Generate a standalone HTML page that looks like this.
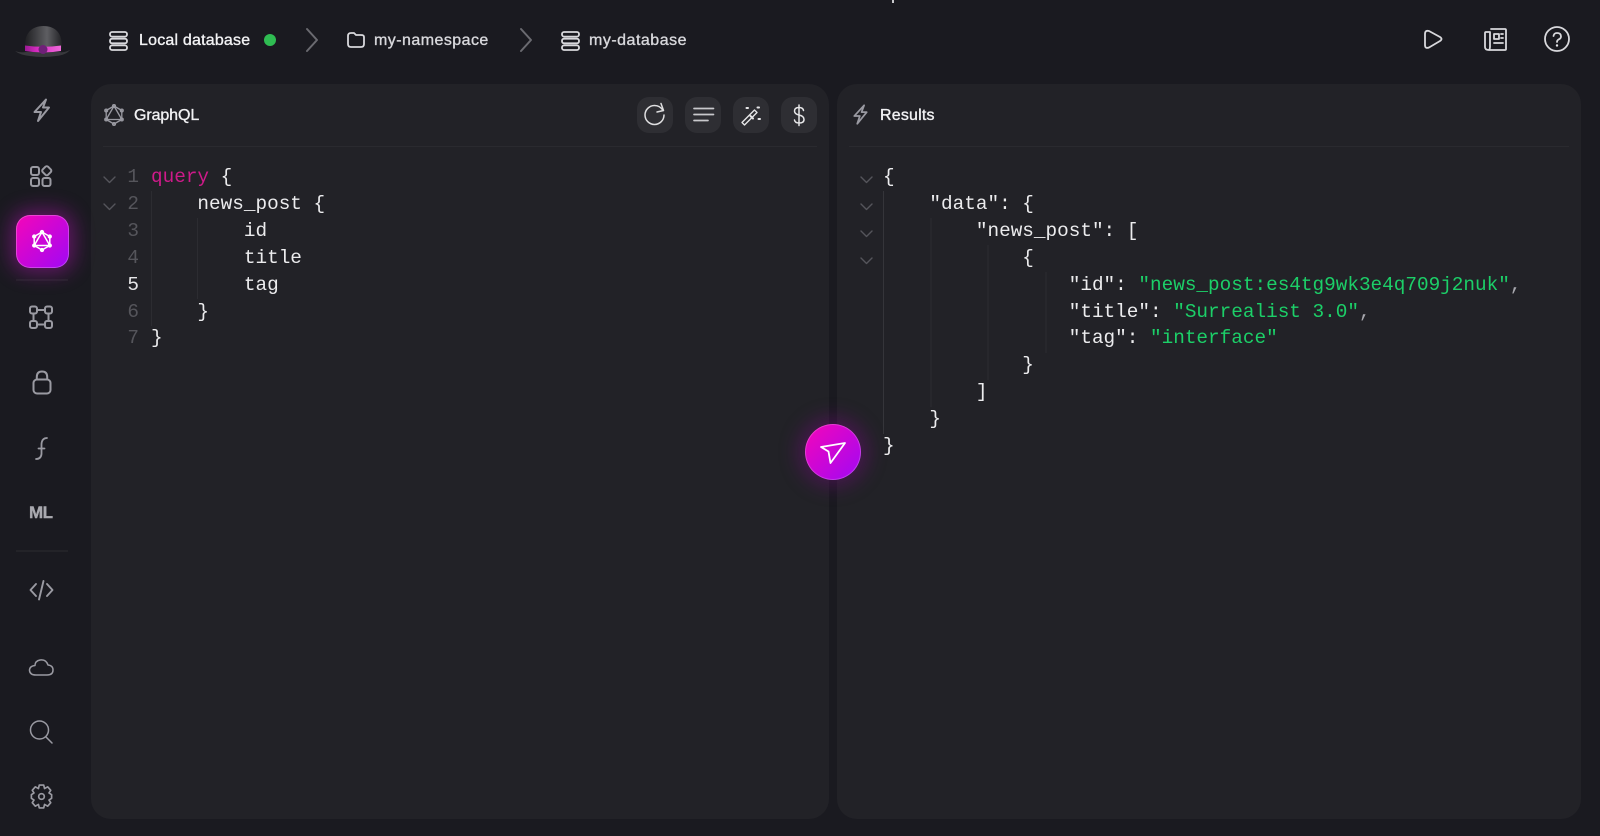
<!DOCTYPE html>
<html><head><meta charset="utf-8"><style>
html,body{margin:0;padding:0;width:1600px;height:836px;overflow:hidden;background:#1a1a20}
body{position:relative;font-family:"Liberation Sans",sans-serif;color:#f2f2f4}
.a{position:absolute}
.panel{position:absolute;top:84px;height:735px;background:#222227;border-radius:20px}
.hr{position:absolute;top:146px;height:1px;background:#2a2a2f}
.t{position:absolute;font-size:16px;line-height:20px;white-space:nowrap;-webkit-text-stroke:.35px currentColor;letter-spacing:.2px}
.c{position:absolute;font-family:"Liberation Mono",monospace;font-size:19.35px;line-height:26.9px;white-space:pre;color:#ececee}
.n{position:absolute;font-family:"Liberation Mono",monospace;font-size:19.35px;line-height:26.9px;color:#55555b;text-align:right;width:20px;left:119px}
.btn{position:absolute;top:97px;width:36px;height:36px;border-radius:12px;background:#2e2e33}
.k{color:#cf1a8a}.g{color:#1ccf68}.p{color:#a8a8ae}
svg{position:absolute;overflow:visible}
.ic{fill:none;stroke:#9a9aa2;stroke-width:2;stroke-linecap:round;stroke-linejoin:round}
.w{fill:none;stroke:#d8d8dc;stroke-width:1.8;stroke-linecap:round;stroke-linejoin:round}
</style></head><body>

<div class="panel" style="left:91px;width:738px"></div>
<div class="panel" style="left:837px;width:744px"></div>
<div class="hr" style="left:103px;width:714px"></div>
<div class="hr" style="left:849px;width:720px"></div>
<div class="a" style="left:892px;top:0;width:2px;height:3px;background:#c8c8cc"></div>

<svg width="1600" height="836" style="left:0;top:0">
<defs>
<linearGradient id="hat" x1="0" y1="0" x2="1" y2="0"><stop offset="0" stop-color="#1f1f22"/><stop offset=".6" stop-color="#5e5e62"/><stop offset="1" stop-color="#242427"/></linearGradient>
<linearGradient id="band" x1="0" y1="0" x2="1" y2="0"><stop offset="0" stop-color="#9c1a94"/><stop offset=".4" stop-color="#e02fc8"/><stop offset="1" stop-color="#ec6ad8"/></linearGradient>
<g id="ql"><path d="M12 3L19.8 16.5H4.2Z"/><path d="M12 3L19.8 7.5V16.5L12 21L4.2 16.5V7.5Z"/><circle cx="12" cy="3" r="1.4"/><circle cx="19.800" cy="7.500" r="1.4"/><circle cx="19.800" cy="16.500" r="1.4"/><circle cx="12" cy="21" r="1.4"/><circle cx="4.200" cy="16.500" r="1.4"/><circle cx="4.200" cy="7.500" r="1.4"/></g>
<g id="db"><rect x="1" y="1" width="17" height="4.6" rx="2"/><rect x="1" y="7.7" width="17" height="4.6" rx="2"/><rect x="1" y="14.4" width="17" height="4.6" rx="2"/></g>
<path id="bolt" d="M17 1.500L5.500 14H12L9 23L20 9.500H14Z"/>
</defs>

<!-- logo -->
<path d="M15 51Q20 55 30 56Q43 58 56 56Q66 55 70 50Q63 53 60 52H26Q20 53 15 51Z" fill="#38383c"/>
<path d="M25 48C24 33 32 26 43.500 26C55 26 63 33 61.500 48Z" fill="url(#hat)"/>
<path d="M25 45.500Q43 48 61 45.500L61 51Q43 54 25 51Z" fill="url(#band)"/>
<circle cx="43" cy="49.500" r="4.500" fill="#6f2078"/>

<!-- breadcrumb -->
<use href="#db" x="109" y="31" class="w"/>
<circle cx="270" cy="40" r="6" fill="#2fbc52"/>
<path d="M307 29L317 40L307 51" fill="none" stroke="#6a6a70" stroke-width="2" stroke-linecap="round" stroke-linejoin="round"/>
<path d="M348 37.500V44Q348 47 351 47H361Q364 47 364 44V37Q364 35 361 35H356L354 33H351Q348 33 348 36Z" class="w"/>
<path d="M521 29L531 40L521 51" fill="none" stroke="#6a6a70" stroke-width="2" stroke-linecap="round" stroke-linejoin="round"/>
<use href="#db" x="561" y="31" class="w"/>

<!-- top right -->
<path d="M1425 34Q1425 30 1429 31L1440 37Q1443 39 1440 41L1429 47.500Q1425 49 1425 45Z" class="w"/>
<path d="M1491 29H1505Q1506 29 1506 30V49Q1506 50 1505 50H1489Q1485 50 1485 47V33Q1485 32 1486 32H1490M1490 32V47Q1490 49 1489 50" class="w"/>
<path d="M1494 34H1499V39H1494ZM1501 34H1503M1501 38H1503M1494 43H1503" class="w" stroke-width="1.500"/>
<circle cx="1557" cy="39" r="12" class="w"/>
<path d="M1553.500 36Q1554 33 1557 33Q1561 33 1561 36.500Q1561 38.500 1558.500 39.500Q1557 40.300 1557 42" class="w" stroke-width="2"/>
<circle cx="1557" cy="45.500" r="1.200" fill="#e6e6e8"/>

<!-- sidebar icons -->
<use href="#bolt" x="29" y="98" class="ic"/>
<g class="ic">
<rect x="31" y="167" width="8" height="8" rx="2"/><rect x="43" y="167" width="7.500" height="7.500" rx="1.800" transform="rotate(45 46.750 170.750)"/>
<rect x="31" y="178" width="8" height="8" rx="2"/><rect x="42.500" y="178" width="8" height="8" rx="2"/>
<rect x="30" y="306.500" width="7" height="7" rx="2"/><rect x="45" y="306.500" width="7" height="7" rx="2"/><rect x="30" y="321" width="7" height="7" rx="2"/><rect x="45" y="321" width="7" height="7" rx="2"/>
<path d="M37 310H45M37 324.500H45M33.500 313.500V321M48.500 313.500V321"/>
<rect x="33.500" y="379.500" width="17" height="14" rx="3.500"/><path d="M36.800 379.500V377Q36.800 371.500 42 371.500Q47.200 371.500 47.200 377V379.500"/>
<path d="M47 438Q42 438 41.500 444L41.500 454Q41 459 36 459M38.500 448.500H44.500" stroke-width="1.800"/>
<path d="M36 584L30.500 590L36 596M47 584L52.500 590L47 596M43.500 581L39 599.500" stroke-width="1.900"/>
<path d="M36 675H47Q53 675 53 670Q53 665.500 48 665Q46 659 40 660Q35 661 35 665.500Q29.500 666 29.500 670.500Q30 675 36 675Z" stroke-width="1.500"/>
<circle cx="39.500" cy="730" r="9" stroke-width="1.500"/><path d="M46 737L52 743" stroke-width="1.500"/>
<g transform="translate(41.500 796.500) scale(.88) translate(-41.500 -797)" stroke-width="1.900"><path d="M39 784H44L45 788L48.500 786L52 790L50 793L53 795V799L50 801L52 804L48.500 808L45 806L44 810H39L38 806L34.500 808L31 804L33 801L30 799V795L33 793L31 790L34.500 786L38 788Z"/><circle cx="41.500" cy="797" r="3.200"/></g>
</g>
<path d="M16 280H68M16 551H68" stroke="#2c2c31" stroke-width="1"/>

<!-- panel icons -->
<use href="#ql" x="102" y="103" fill="none" stroke="#9a9aa2" stroke-width="1.300" stroke-linejoin="round"/>
<use href="#bolt" transform="translate(849.500 104) scale(.86)" class="ic"/>

<!-- indent guides -->
<g stroke="#2c2c31" stroke-width="1">
<path d="M151.500 191V326M197.500 218V299"/>
<path d="M883.500 191V434" stroke="#35353a"/>
<path d="M931 218V407M988 245V380M1046 272V353"/>
</g>

<!-- fold chevrons -->
<g fill="none" stroke="#55555b" stroke-width="1.400" stroke-linecap="round" stroke-linejoin="round">
<path d="M104 177L109.500 182.500L115 177M104 204L109.500 209.500L115 204"/>
<path d="M861 177L866.500 182.500L872 177M861 204L866.500 209.500L872 204M861 231L866.500 236.500L872 231M861 258L866.500 263.500L872 258"/>
</g>
</svg>

<div class="btn" style="left:637px"></div><div class="btn" style="left:685px"></div><div class="btn" style="left:733px"></div><div class="btn" style="left:781px"></div>
<svg width="1600" height="836" style="left:0;top:0">
<path d="M663 110.500Q660 105.500 654.500 105.500A9.500 9.500 0 1 0 664 115" fill="none" stroke="#dedee0" stroke-width="1.500" stroke-linecap="round"/>
<path d="M661 103.500L663.500 110.500L657 112" fill="none" stroke="#dedee0" stroke-width="1.500" stroke-linecap="round" stroke-linejoin="round"/>
<path d="M694 108.500H713.500M694 114.500H713.500M694 120.500H708" fill="none" stroke="#c8c8cc" stroke-width="1.700" stroke-linecap="round"/>
<path d="M742 122.500L744.500 125L757 112.500L754.500 110Z" fill="none" stroke="#e6e6e8" stroke-width="1.400" stroke-linejoin="round"/>
<path d="M746.500 108H748M757.500 107.500H759M758.500 119H760M750.500 116L753 118.500" fill="none" stroke="#e6e6e8" stroke-width="2" stroke-linecap="round"/>
<path d="M803.500 110.500Q803 107.500 799 107.500Q794.500 107.500 794.500 111Q794.500 114 799 115Q804 116 804 119.500Q804 123 799 123Q795 123 794.500 120M799 105V125.500" fill="none" stroke="#e6e6e8" stroke-width="1.500" stroke-linecap="round"/>
</svg>

<!-- active tile -->
<div class="a" style="left:16px;top:215px;width:53px;height:53px;border-radius:14px;background:linear-gradient(135deg,#f505b8,#a008f5);box-shadow:0 0 20px 5px rgba(200,20,200,.42),inset 0 0 0 1px rgba(255,255,255,.25)"></div>
<svg width="24" height="24" style="left:29.500px;top:229px;fill:none;stroke:#fff;stroke-width:1.500;stroke-linejoin:round"><use href="#ql"/></svg>

<!-- send -->
<div class="a" style="left:805px;top:424px;width:56px;height:56px;border-radius:50%;background:linear-gradient(135deg,#f505b8,#a008f5);box-shadow:0 0 0 1px rgba(255,255,255,.22) inset,0 0 18px 8px rgba(130,10,140,.35)"></div>
<svg width="1600" height="836" style="left:0;top:0"><path d="M821 447L845 443L830.500 463L828.500 451.500Z" fill="none" stroke="#fff" stroke-width="1.800" stroke-linejoin="round"/></svg>

<!-- texts -->
<div class="t" style="left:139px;top:31px">Local database</div>
<div class="t" style="left:374px;top:31px;color:#d8d8dc;letter-spacing:.45px">my-namespace</div>
<div class="t" style="left:589px;top:31px;color:#d8d8dc;letter-spacing:.5px">my-database</div>
<div class="t" style="left:134px;top:106px;letter-spacing:-.1px">GraphQL</div>
<div class="t" style="left:880px;top:106px">Results</div>
<div class="t" style="left:29px;top:503px;color:#a8a8ae;font-weight:bold;font-size:17px;-webkit-text-stroke:.4px #a8a8ae;letter-spacing:-.5px">ML</div>

<div class="n" style="top:164px">1</div>
<div class="n" style="top:190.900px">2</div>
<div class="n" style="top:217.800px">3</div>
<div class="n" style="top:244.700px">4</div>
<div class="n" style="top:271.600px;color:#e6e6e8">5</div>
<div class="n" style="top:298.500px">6</div>
<div class="n" style="top:325.400px">7</div>

<div class="c" style="left:151px;top:164px"><span class="k">query</span> {
    news_post {
        id
        title
        tag
    }
}</div>

<div class="c" style="left:883px;top:164px">{
    "data": {
        "news_post": [
            {
                "id": <span class="g">"news_post:es4tg9wk3e4q709j2nuk"</span><span class="p">,</span>
                "title": <span class="g">"Surrealist 3.0"</span><span class="p">,</span>
                "tag": <span class="g">"interface"</span>
            }
        ]
    }
}</div>

</body></html>
